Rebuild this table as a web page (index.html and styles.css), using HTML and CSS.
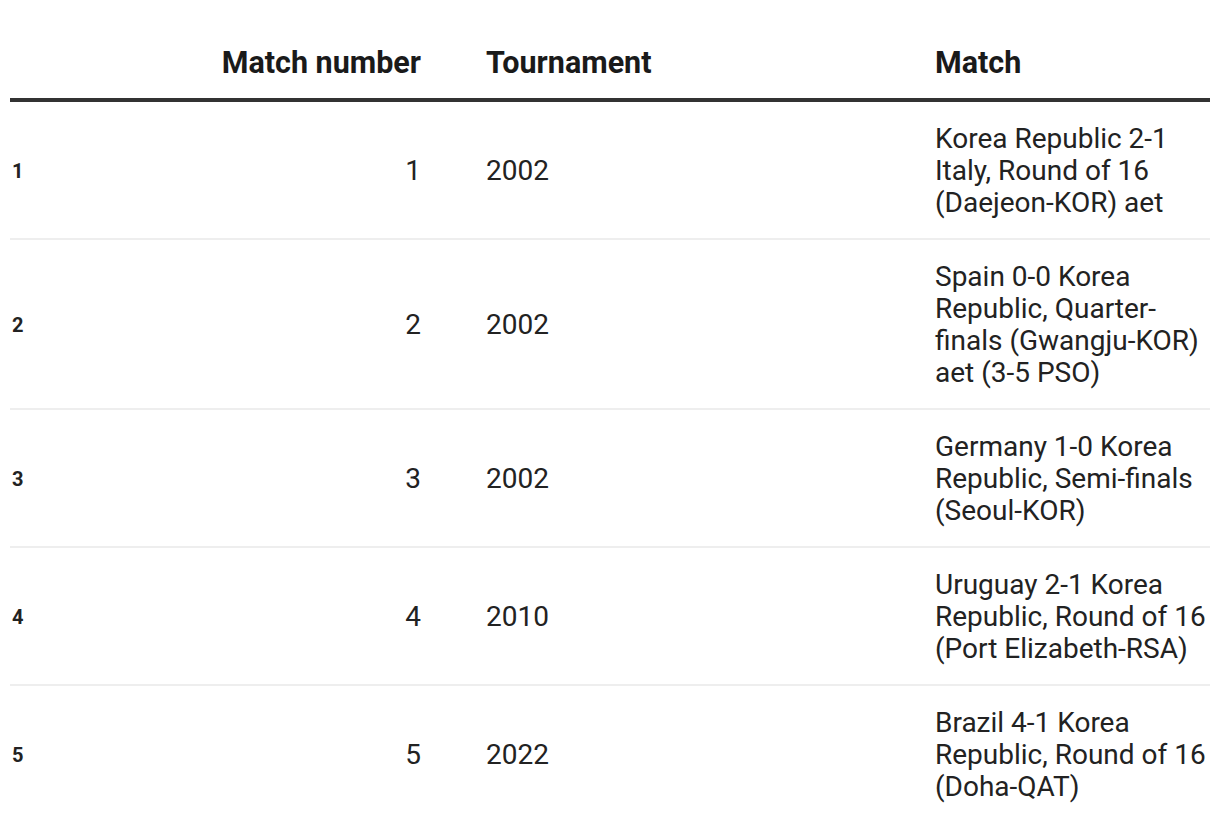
FILE: index.html
```html
<!DOCTYPE html>
<html>
<head>
<meta charset="utf-8">
<link rel="stylesheet" href="styles.css">
</head>
<body>
<table class="data">
  <colgroup>
    <col class="c-idx">
    <col class="c-num">
    <col class="c-tour">
    <col class="c-match">
  </colgroup>
  <thead>
    <tr>
      <th class="idx"></th>
      <th class="num">Match number</th>
      <th class="tour">Tournament</th>
      <th class="match">Match</th>
    </tr>
  </thead>
  <tbody>
    <tr>
      <td class="idx">1</td>
      <td class="num">1</td>
      <td class="tour">2002</td>
      <td class="match">Korea Republic 2-1 Italy, Round of 16 (Daejeon-KOR) aet</td>
    </tr>
    <tr>
      <td class="idx">2</td>
      <td class="num">2</td>
      <td class="tour">2002</td>
      <td class="match">Spain 0-0 Korea Republic, Quarter-finals (Gwangju-KOR) aet (3-5 PSO)</td>
    </tr>
    <tr>
      <td class="idx">3</td>
      <td class="num">3</td>
      <td class="tour">2002</td>
      <td class="match">Germany 1-0 Korea Republic, Semi-finals (Seoul-KOR)</td>
    </tr>
    <tr>
      <td class="idx">4</td>
      <td class="num">4</td>
      <td class="tour">2010</td>
      <td class="match">Uruguay 2-1 Korea Republic, Round of 16 (Port Elizabeth-RSA)</td>
    </tr>
    <tr>
      <td class="idx">5</td>
      <td class="num">5</td>
      <td class="tour">2022</td>
      <td class="match">Brazil 4-1 Korea Republic, Round of 16 (Doha-QAT)</td>
    </tr>
  </tbody>
</table>
</body>
</html>
```
FILE: styles.css
```css
html, body {
  margin: 0;
  padding: 0;
  background: #fff;
}
body {
  font-family: Roboto, "Liberation Sans", sans-serif;
  color: #222;
}
.data {
  margin: 26px 10px 0 10px;
  width: 1200px;
  table-layout: fixed;
  border-collapse: collapse;
}
.c-idx { width: 180px; }
.c-num { width: 263px; }
.c-tour { width: 449px; }
.c-match { width: 308px; }

.data th {
  font-size: 30.5px;
  font-weight: 700;
  line-height: 32px;
  padding: 21px 0 19px 0;
  border-bottom: 4px solid #333;
  text-align: left;
  vertical-align: middle;
  color: #1a1a1a;
}
.data td {
  font-size: 28px;
  line-height: 32px;
  padding: 21px 0 19px 0;
  border-bottom: 2px solid #eee;
  vertical-align: middle;
}
.data tbody tr:last-child td {
  border-bottom: none;
}
.data .idx {
  padding-left: 2px;
  font-size: 20px;
  font-weight: 700;
}
.data .num {
  text-align: right;
  padding-right: 32px;
}
.data .tour {
  padding-left: 33px;
}
.data .match {
  padding-left: 33px;
  padding-right: 0;
}
```
